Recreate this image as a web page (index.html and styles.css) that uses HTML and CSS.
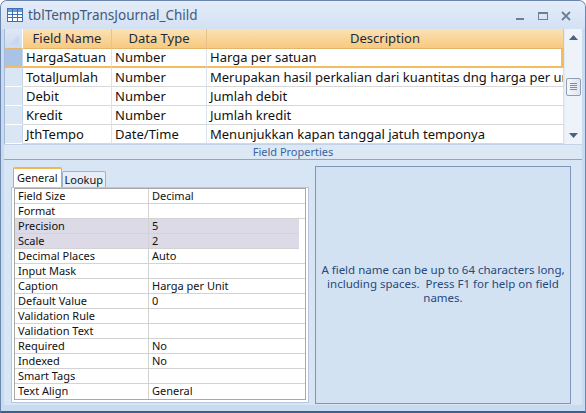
FILE: index.html
```html
<!DOCTYPE html>
<html>
<head>
<meta charset="utf-8">
<link rel="stylesheet" href="styles.css">
</head>
<body>
<div class="window">
  <div class="titlebar">
    <svg class="ticon" width="16" height="14" viewBox="0 0 16 14">
      <rect x="0.5" y="0.5" width="15" height="13" fill="#ffffff" stroke="#3d6fb4"/>
      <rect x="1" y="1" width="14" height="3" fill="#6f98d2"/>
      <path d="M1 6.5H15M1 9.5H15M5.5 1V13M10.5 1V13" stroke="#3d6fb4" stroke-width="1"/>
    </svg>
    <span class="title">tblTempTransJournal_Child</span>
    <div class="controls">
      <svg width="14" height="14" viewBox="0 0 14 14"><rect x="3" y="9" width="8" height="2" fill="#6b7f99"/></svg>
      <svg width="14" height="14" viewBox="0 0 14 14"><rect x="2.5" y="3.5" width="9" height="7" fill="none" stroke="#6b7f99"/><rect x="2" y="3" width="10" height="2" fill="#6b7f99"/></svg>
      <svg width="14" height="14" viewBox="0 0 14 14"><path d="M3 3L11 11M11 3L3 11" stroke="#6b7f99" stroke-width="1.8"/></svg>
    </div>
  </div>

  <div class="sheet">
    <div class="grid">
      <div class="hsel"><svg width="18" height="20" viewBox="0 0 18 20"><path d="M4 16L14 6V16Z" fill="#c9d8ee"/></svg></div>
      <div class="hcell">Field Name</div>
      <div class="hcell">Data Type</div>
      <div class="hcell">Description</div>

      <div class="sel cur"></div>
      <div class="cell c1 cur">HargaSatuan</div>
      <div class="cell cur">Number</div>
      <div class="cell cur clast">Harga per satuan</div>

      <div class="sel"></div>
      <div class="cell c1">TotalJumlah</div>
      <div class="cell">Number</div>
      <div class="cell">Merupakan hasil perkalian dari kuantitas dng harga per unit</div>

      <div class="sel"></div>
      <div class="cell c1">Debit</div>
      <div class="cell">Number</div>
      <div class="cell">Jumlah debit</div>

      <div class="sel"></div>
      <div class="cell c1">Kredit</div>
      <div class="cell">Number</div>
      <div class="cell">Jumlah kredit</div>

      <div class="sel"></div>
      <div class="cell c1">JthTempo</div>
      <div class="cell">Date/Time</div>
      <div class="cell">Menunjukkan kapan tanggal jatuh temponya</div>
    </div>
    <div class="vscroll">
      <div class="arrow"><svg width="9" height="5" viewBox="0 0 9 5"><path d="M0 5L4.5 0L9 5Z" fill="#4d6185"/></svg></div>
      <div class="track">
        <div class="thumb"><svg width="9" height="9" viewBox="0 0 9 9"><path d="M1 1.5H8M1 3.5H8M1 5.5H8M1 7.5H8" stroke="#7f8ea8"/></svg></div>
      </div>
      <div class="arrow"><svg width="9" height="5" viewBox="0 0 9 5"><path d="M0 0L4.5 5L9 0Z" fill="#4d6185"/></svg></div>
    </div>
  </div>

  <div class="fplabel">Field Properties</div>

  <div class="props">
    <div class="left">
      <div class="tabs">
        <div class="tab active">General</div>
        <div class="tab">Lookup</div>
      </div>
      <div class="page">
        <div class="pgrid">
          <div class="pl">Field Size</div><div class="pv">Decimal</div>
          <div class="pl">Format</div><div class="pv"></div>
          <div class="pl hl">Precision</div><div class="pv hl">5</div>
          <div class="pl hl">Scale</div><div class="pv hl">2</div>
          <div class="pl">Decimal Places</div><div class="pv">Auto</div>
          <div class="pl">Input Mask</div><div class="pv"></div>
          <div class="pl">Caption</div><div class="pv">Harga per Unit</div>
          <div class="pl">Default Value</div><div class="pv">0</div>
          <div class="pl">Validation Rule</div><div class="pv"></div>
          <div class="pl">Validation Text</div><div class="pv"></div>
          <div class="pl">Required</div><div class="pv">No</div>
          <div class="pl">Indexed</div><div class="pv">No</div>
          <div class="pl">Smart Tags</div><div class="pv"></div>
          <div class="pl last">Text Align</div><div class="pv last">General</div>
        </div>
      </div>
    </div>
    <div class="help"><p class="helptext">A field name can be up to 64 characters long,<br>including spaces.&nbsp; Press F1 for help on field<br>names.</p></div>
  </div>
</div>
</body>
</html>
```

FILE: styles.css
```css
html, body {
  margin: 0;
  padding: 0;
  background: #ffffff;
}
body {
  font-family: "Segoe UI", "Noto Sans", "DejaVu Sans", sans-serif;
}
.window {
  width: 586px;
  height: 413px;
  box-sizing: border-box;
  border: 1px solid #6b86ad;
  border-bottom: 2px solid #3f5f8c;
  border-radius: 7px 7px 0 0;
  background: #c9dbf0;
  display: flex;
  flex-direction: column;
  overflow: hidden;
}
.titlebar {
  height: 28px;
  flex: none;
  display: flex;
  align-items: center;
  padding-left: 6px;
  background: linear-gradient(#e4edf9, #d3e1f3);
}
.ticon { flex: none; }
.title {
  margin-left: 5px;
  font-size: 13.5px;
  color: #44597a;
  flex: 1;
}
.controls {
  display: flex;
  gap: 9px;
  margin-right: 12px;
  margin-top: 2px;
}
.sheet {
  margin: 0 3px 0 3px;
  height: 115px;
  flex: none;
  display: flex;
  background: #ffffff;
  border-left: 1px solid #a6b9d6;
}
.grid {
  flex: 1;
  display: grid;
  grid-template-columns: 18px 89px 95px 1fr;
  grid-template-rows: 20px repeat(5, 19px);
  overflow: hidden;
}
.hsel {
  background: linear-gradient(#dfe8f5, #cddcf0);
  border-right: 1px solid #ffffff;
  border-bottom: 1px solid #e3b66b;
}
.hsel svg { display: block; }
.hcell {
  background: linear-gradient(#fbe2b4, #f7c97f);
  border-right: 1px solid #e8c48c;
  border-bottom: 1px solid #e3b66b;
  font-size: 13px;
  color: #1e2a3a;
  text-align: center;
  line-height: 19px;
  white-space: nowrap;
}
.sel {
  background: #dbe6f4;
  border-bottom: 1px solid #ffffff;
  border-right: 1px solid #c6d4e8;
}
.sel.cur {
  background: #a9c3e6;
  border-bottom: 2px solid #f2bd62;
}
.cell {
  font-size: 13px;
  color: #111111;
  padding-left: 3px;
  line-height: 18px;
  border-right: 1px solid #dde3ec;
  border-bottom: 1px solid #d8d8d8;
  white-space: nowrap;
  overflow: hidden;
}
.cell.cur {
  border-bottom: 2px solid #f2bd62;
  line-height: 17px;
}
.cell.clast {
  border-right: 3px solid #f2bd62;
}
.vscroll {
  width: 17px;
  flex: none;
  background: #eef3fa;
  border-left: 1px solid #e3eaf4;
  display: flex;
  flex-direction: column;
}
.arrow {
  height: 17px;
  display: flex;
  align-items: center;
  justify-content: center;
}
.track {
  flex: 1;
  display: flex;
  flex-direction: column;
  justify-content: center;
}
.thumb {
  height: 18px;
  margin: 0 1px;
  box-sizing: border-box;
  border: 1px solid #8f9db5;
  border-radius: 2px;
  background: linear-gradient(90deg, #f4f6fa, #dfe5ee);
  display: flex;
  align-items: center;
  justify-content: center;
}
.thumb svg { display: block; }
.fplabel {
  flex: none;
  height: 14px;
  margin: 0 3px;
  background: #dde8f5;
  border-top: 1px solid #c3d3e8;
  border-bottom: 1px solid #8ea5c6;
  font-size: 11px;
  line-height: 13px;
  color: #3a63a0;
  text-align: center;
}
.props {
  flex: 1;
  margin: 0 3px 6px 3px;
  background: #d8e5f4;
  display: flex;
  padding: 6px 0 0 7px;
  gap: 6px;
}
.left {
  width: 298px;
  display: flex;
  flex-direction: column;
}
.tabs {
  display: flex;
  align-items: flex-end;
  height: 21px;
  padding-left: 2px;
}
.tab {
  font-size: 11px;
  color: #111111;
  background: #e7eef8;
  border: 1px solid #9fb1cc;
  border-bottom: none;
  height: 15px;
  line-height: 15px;
  padding: 0 2px 0 2px;
  border-radius: 2px 2px 0 0;
}
.tab.active {
  background: #ffffff;
  border-top: 2px solid #f0b650;
  height: 18px;
  line-height: 18px;
  padding: 0 3px;
}
.page {
  background: #ffffff;
  border: 1px solid #b7c6da;
  padding: 0 2px 2px 2px;
  width: 298px;
  box-sizing: border-box;
}
.pgrid {
  display: grid;
  grid-template-columns: 134px 1fr;
  grid-auto-rows: 15px;
  border: 1px solid #a9a9a9;
}
.pl, .pv {
  font-size: 11px;
  line-height: 14px;
  color: #111111;
  padding-left: 3px;
  border-bottom: 1px solid #d3d3d3;
  white-space: nowrap;
}
.pl { border-right: 1px solid #d3d3d3; }
.pl.hl, .pv.hl { background: #dcdae6; }
.pv.hl { margin-right: 6px; }
.last { border-bottom: none; }
.help {
  width: 256px;
  height: 238px;
  box-sizing: border-box;
  border: 1px solid #7f95ba;
  background: #d3e2f2;
  display: flex;
  align-items: center;
  justify-content: center;
  padding: 0 0 2px 0;
}
.helptext {
  margin: 0;
  text-align: center;
  white-space: nowrap;
  font-size: 11.5px;
  line-height: 14px;
  color: #25497d;
}
```
